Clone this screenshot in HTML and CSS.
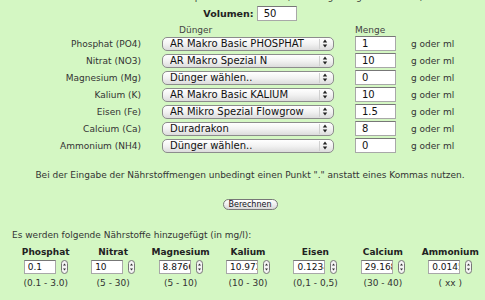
FILE: index.html
```html
<!DOCTYPE html>
<html lang="de">

<head>
    <meta charset="UTF-8">
    <meta name="viewport" content="width=device-width, initial-scale=1.0">
    <title>Dünger Rechner</title>
    <link rel="stylesheet" href="styles.css">
</head>

<body>
    <div class="page">
        <p class="intro">Gib das Volumen deines Aquariums in Litern an, für das gedüngt werden soll).</p>

        <div class="volume">
            <label for="volumen">Volumen:</label>
            <input type="text" id="volumen" class="field" value="50">
        </div>

        <div class="dosing">
            <div class="head"></div>
            <div class="head head-select">Dünger</div>
            <div class="head">Menge</div>
            <div class="head"></div>

            <label class="name" for="d1">Phosphat (PO4)</label>
            <span class="popup">
                <select id="d1"><option>AR Makro Basic PHOSPHAT</option></select>
                <svg class="popup-arrows" width="6" height="9" viewBox="0 0 6 9"><path d="M0.8 3.6 L3 0.6 L5.2 3.6 Z M0.8 5.4 L3 8.4 L5.2 5.4 Z" fill="#222"/></svg>
            </span>
            <input type="text" class="field amount" value="1">
            <span class="unit">g oder ml</span>

            <label class="name" for="d2">Nitrat (NO3)</label>
            <span class="popup">
                <select id="d2"><option>AR Makro Spezial N</option></select>
                <svg class="popup-arrows" width="6" height="9" viewBox="0 0 6 9"><path d="M0.8 3.6 L3 0.6 L5.2 3.6 Z M0.8 5.4 L3 8.4 L5.2 5.4 Z" fill="#222"/></svg>
            </span>
            <input type="text" class="field amount" value="10">
            <span class="unit">g oder ml</span>

            <label class="name" for="d3">Magnesium (Mg)</label>
            <span class="popup">
                <select id="d3"><option>Dünger wählen..</option></select>
                <svg class="popup-arrows" width="6" height="9" viewBox="0 0 6 9"><path d="M0.8 3.6 L3 0.6 L5.2 3.6 Z M0.8 5.4 L3 8.4 L5.2 5.4 Z" fill="#222"/></svg>
            </span>
            <input type="text" class="field amount" value="0">
            <span class="unit">g oder ml</span>

            <label class="name" for="d4">Kalium (K)</label>
            <span class="popup">
                <select id="d4"><option>AR Makro Basic KALIUM</option></select>
                <svg class="popup-arrows" width="6" height="9" viewBox="0 0 6 9"><path d="M0.8 3.6 L3 0.6 L5.2 3.6 Z M0.8 5.4 L3 8.4 L5.2 5.4 Z" fill="#222"/></svg>
            </span>
            <input type="text" class="field amount" value="10">
            <span class="unit">g oder ml</span>

            <label class="name" for="d5">Eisen (Fe)</label>
            <span class="popup">
                <select id="d5"><option>AR Mikro Spezial Flowgrow</option></select>
                <svg class="popup-arrows" width="6" height="9" viewBox="0 0 6 9"><path d="M0.8 3.6 L3 0.6 L5.2 3.6 Z M0.8 5.4 L3 8.4 L5.2 5.4 Z" fill="#222"/></svg>
            </span>
            <input type="text" class="field amount" value="1.5">
            <span class="unit">g oder ml</span>

            <label class="name" for="d6">Calcium (Ca)</label>
            <span class="popup">
                <select id="d6"><option>Duradrakon</option></select>
                <svg class="popup-arrows" width="6" height="9" viewBox="0 0 6 9"><path d="M0.8 3.6 L3 0.6 L5.2 3.6 Z M0.8 5.4 L3 8.4 L5.2 5.4 Z" fill="#222"/></svg>
            </span>
            <input type="text" class="field amount" value="8">
            <span class="unit">g oder ml</span>

            <label class="name" for="d7">Ammonium (NH4)</label>
            <span class="popup">
                <select id="d7"><option>Dünger wählen..</option></select>
                <svg class="popup-arrows" width="6" height="9" viewBox="0 0 6 9"><path d="M0.8 3.6 L3 0.6 L5.2 3.6 Z M0.8 5.4 L3 8.4 L5.2 5.4 Z" fill="#222"/></svg>
            </span>
            <input type="text" class="field amount" value="0">
            <span class="unit">g oder ml</span>
        </div>

        <p class="note">Bei der Eingabe der Nährstoffmengen unbedingt einen Punkt "." anstatt eines Kommas nutzen.</p>

        <div class="actions">
            <button type="button" class="calc">Berechnen</button>
        </div>

        <p class="result-title">Es werden folgende Nährstoffe hinzugefügt (in mg/l):</p>

        <div class="results">
            <div class="nutrient">
                <div class="nutrient-name">Phosphat</div>
                <div class="stepper"><input type="text" class="value" value="0.1"><svg class="spin" width="7" height="14" viewBox="0 0 7 14"><rect x="0.5" y="0.5" width="6" height="13" rx="3" fill="#f4f4f4" stroke="#777"/><path d="M2 5.5 L3.5 3.5 L5 5.5 Z M2 8.5 L3.5 10.5 L5 8.5 Z" fill="#333"/></svg></div>
                <div class="range">(0.1 - 3.0)</div>
            </div>
            <div class="nutrient">
                <div class="nutrient-name">Nitrat</div>
                <div class="stepper"><input type="text" class="value" value="10"><svg class="spin" width="7" height="14" viewBox="0 0 7 14"><rect x="0.5" y="0.5" width="6" height="13" rx="3" fill="#f4f4f4" stroke="#777"/><path d="M2 5.5 L3.5 3.5 L5 5.5 Z M2 8.5 L3.5 10.5 L5 8.5 Z" fill="#333"/></svg></div>
                <div class="range">(5 - 30)</div>
            </div>
            <div class="nutrient">
                <div class="nutrient-name">Magnesium</div>
                <div class="stepper"><input type="text" class="value" value="8.8766"><svg class="spin" width="7" height="14" viewBox="0 0 7 14"><rect x="0.5" y="0.5" width="6" height="13" rx="3" fill="#f4f4f4" stroke="#777"/><path d="M2 5.5 L3.5 3.5 L5 5.5 Z M2 8.5 L3.5 10.5 L5 8.5 Z" fill="#333"/></svg></div>
                <div class="range">(5 - 10)</div>
            </div>
            <div class="nutrient">
                <div class="nutrient-name">Kalium</div>
                <div class="stepper"><input type="text" class="value" value="10.972"><svg class="spin" width="7" height="14" viewBox="0 0 7 14"><rect x="0.5" y="0.5" width="6" height="13" rx="3" fill="#f4f4f4" stroke="#777"/><path d="M2 5.5 L3.5 3.5 L5 5.5 Z M2 8.5 L3.5 10.5 L5 8.5 Z" fill="#333"/></svg></div>
                <div class="range">(10 - 30)</div>
            </div>
            <div class="nutrient">
                <div class="nutrient-name">Eisen</div>
                <div class="stepper"><input type="text" class="value" value="0.1234"><svg class="spin" width="7" height="14" viewBox="0 0 7 14"><rect x="0.5" y="0.5" width="6" height="13" rx="3" fill="#f4f4f4" stroke="#777"/><path d="M2 5.5 L3.5 3.5 L5 5.5 Z M2 8.5 L3.5 10.5 L5 8.5 Z" fill="#333"/></svg></div>
                <div class="range">(0,1 - 0,5)</div>
            </div>
            <div class="nutrient">
                <div class="nutrient-name">Calcium</div>
                <div class="stepper"><input type="text" class="value" value="29.168"><svg class="spin" width="7" height="14" viewBox="0 0 7 14"><rect x="0.5" y="0.5" width="6" height="13" rx="3" fill="#f4f4f4" stroke="#777"/><path d="M2 5.5 L3.5 3.5 L5 5.5 Z M2 8.5 L3.5 10.5 L5 8.5 Z" fill="#333"/></svg></div>
                <div class="range">(30 - 40)</div>
            </div>
            <div class="nutrient">
                <div class="nutrient-name">Ammonium</div>
                <div class="stepper"><input type="text" class="value" value="0.0145"><svg class="spin" width="7" height="14" viewBox="0 0 7 14"><rect x="0.5" y="0.5" width="6" height="13" rx="3" fill="#f4f4f4" stroke="#777"/><path d="M2 5.5 L3.5 3.5 L5 5.5 Z M2 8.5 L3.5 10.5 L5 8.5 Z" fill="#333"/></svg></div>
                <div class="range">( xx )</div>
            </div>
        </div>
    </div>
</body>

</html>
```

FILE: styles.css
```css
body {
    margin: 0;
    background-color: #d4f7c3;
    font-family: 'DejaVu Sans', sans-serif;
    font-size: 9px;
    color: #333;
    overflow: hidden;
}

.page {
    width: 500px;
}

p {
    margin: 0;
}

.intro {
    margin-top: -9px;
    line-height: 12px;
    text-align: center;
    white-space: nowrap;
}

.volume {
    margin-top: 3px;
    height: 15px;
    display: flex;
    align-items: center;
    justify-content: center;
    gap: 3px;
}

.volume label {
    font-weight: bold;
    font-size: 9.5px;
    color: #222;
}

.field {
    box-sizing: border-box;
    width: 41px;
    height: 15px;
    padding: 0 0 0 6px;
    border: 1px solid #a8a8a8;
    border-top-color: #777;
    background: #fff;
    font-family: 'DejaVu Sans', sans-serif;
    font-size: 10px;
    color: #111;
    outline: none;
}

#volumen {
    width: 40px;
}

.dosing {
    display: grid;
    grid-template-columns: 162px 193px 56px auto;
    grid-template-rows: 14px repeat(7, 17px);
    align-items: center;
}

.head {
    padding-top: 3px;
    color: #444;
}

.head-select {
    padding-left: 17px;
}

.name {
    text-align: right;
    padding-right: 21px;
}

.popup {
    position: relative;
    display: block;
    width: 172px;
    height: 14px;
}

.popup select {
    appearance: none;
    -webkit-appearance: none;
    box-sizing: border-box;
    width: 172px;
    height: 14px;
    margin: 0;
    padding: 0 0 0 7px;
    border: 1px solid #8c8c8c;
    border-radius: 5px;
    background: linear-gradient(#ffffff, #f2f2f2 50%, #dcdcdc);
    font-family: 'DejaVu Sans', sans-serif;
    font-size: 10px;
    line-height: 12px;
    color: #111;
    outline: none;
}

/* Aqua style popup: arrow area with a faint divider */
.popup::after {
    content: "";
    position: absolute;
    right: 14px;
    top: 2px;
    bottom: 2px;
    border-left: 1px solid #d0d0d0;
    pointer-events: none;
}

.popup-arrows {
    position: absolute;
    right: 6px;
    top: 2px;
    pointer-events: none;
}

.note {
    margin-top: 15px;
    line-height: 12px;
    text-align: center;
}

.actions {
    margin-top: 18px;
    display: flex;
    justify-content: center;
}

.calc {
    box-sizing: border-box;
    width: 55px;
    height: 11px;
    padding: 0;
    border: 1px solid #777;
    border-radius: 6px;
    background: linear-gradient(#ffffff, #eeeeee 50%, #d8d8d8);
    font-family: 'DejaVu Sans', sans-serif;
    font-size: 8px;
    line-height: 9px;
    color: #112;
}

.result-title {
    margin-top: 19px;
    padding-left: 12px;
    line-height: 12px;
}

.results {
    margin-left: 12px;
    width: 472px;
    display: grid;
    grid-template-columns: repeat(7, 1fr);
}

.nutrient {
    text-align: center;
}

.nutrient-name {
    margin-top: 5px;
    line-height: 12px;
    font-weight: bold;
    color: #222;
}

.stepper {
    margin-top: 2px;
    display: flex;
    justify-content: center;
    align-items: center;
    gap: 5px;
    height: 14px;
}

.value {
    box-sizing: border-box;
    width: 32px;
    height: 14px;
    padding: 0 0 0 3px;
    border: 1px solid #a8a8a8;
    border-top-color: #777;
    background: #fff;
    font-family: 'DejaVu Sans', sans-serif;
    font-size: 9px;
    color: #111;
    outline: none;
}

.range {
    margin-top: 3px;
    line-height: 12px;
}
```
